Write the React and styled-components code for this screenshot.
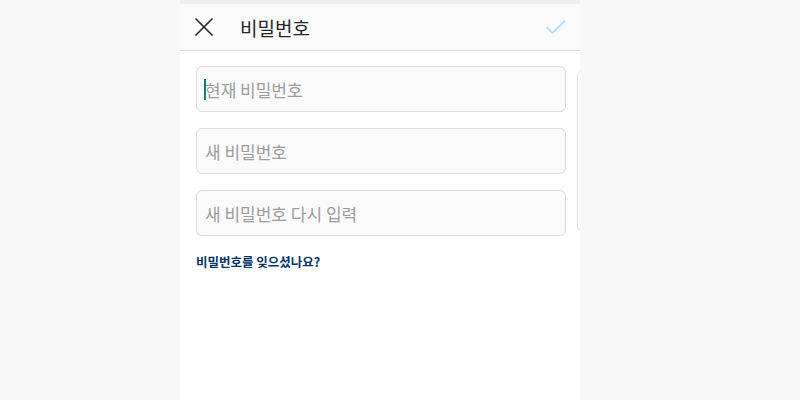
import React from "react";
import styled, { createGlobalStyle } from "styled-components";

const GlobalStyle = createGlobalStyle`
  html, body {
    margin: 0;
    padding: 0;
    background: #f8f8f8;
    font-family: "Noto Sans CJK KR", "Noto Sans", sans-serif;
  }
`;

const Page = styled.div`
  height: 400px;
  display: flex;
  padding-left: 180px;
  overflow: hidden;
`;

const Column = styled.div`
  width: 400px;
  background: #fff;
  position: relative;
  overflow: hidden;
`;

const TopStrip = styled.div`
  height: 4px;
  background: #efefef;
`;

const Header = styled.header`
  height: 47px;
  box-sizing: border-box;
  display: flex;
  align-items: center;
  padding: 0 12px 0 14px;
  background: #fafafa;
  border-bottom: 1px solid #dbdbdb;
`;

const IconButton = styled.button`
  border: 0;
  background: none;
  padding: 0;
  display: flex;
  align-items: center;
  justify-content: center;
  width: ${(p) => p.size}px;
  height: ${(p) => p.size}px;
`;

const Title = styled.h1`
  flex: 1;
  margin: 0 0 0 26px;
  font-size: 19px;
  font-weight: 400;
  color: #262626;
`;

const Form = styled.form`
  display: flex;
  flex-direction: column;
  gap: 16px;
  padding: 15px 14px 0 16px;
`;

const Field = styled.input`
  height: 46px;
  box-sizing: border-box;
  border: 1px solid #dbdbdb;
  border-radius: 6px;
  background: #fafafa;
  padding: 0 8px;
  font-family: inherit;
  font-size: 17px;
  color: #262626;
  outline: none;
  caret-color: #00897b;
  &::placeholder {
    color: #9c9c9c;
  }
`;

const Forgot = styled.a`
  display: block;
  margin: 16px 0 0 16px;
  font-size: 12.5px;
  font-weight: 700;
  color: #003569;
  text-decoration: none;
`;

const EdgeCard = styled.div`
  position: absolute;
  left: 397px;
  top: 70px;
  width: 20px;
  height: 160px;
  border: 1px solid #e0e0e0;
  border-radius: 6px;
  background: #fff;
`;

const Caret = styled.span`
  position: absolute;
  left: 24px;
  top: 79px;
  width: 2px;
  height: 21px;
  background: #00897b;
`;

export default function App() {
  return (
    <>
      <GlobalStyle />
      <Page>
        <Column>
          <TopStrip />
          <Header>
            <IconButton size={20} aria-label="닫기">
              <svg width="20" height="20" viewBox="0 0 20 20">
                <path d="M1.5 1.5 L18.5 18.5 M18.5 1.5 L1.5 18.5" stroke="#262626" strokeWidth="1.6" fill="none" />
              </svg>
            </IconButton>
            <Title>비밀번호</Title>
            <IconButton size={24} aria-label="완료">
              <svg width="22" height="18" viewBox="0 0 22 18">
                <path d="M1.5 9 L7.5 15 L20 2.5" stroke="#b2dffc" strokeWidth="1.8" fill="none" />
              </svg>
            </IconButton>
          </Header>
          <Form>
            <Field type="password" placeholder="현재 비밀번호" />
            <Field type="password" placeholder="새 비밀번호" />
            <Field type="password" placeholder="새 비밀번호 다시 입력" />
          </Form>
          <Forgot href="#">비밀번호를 잊으셨나요?</Forgot>
          <Caret />
          <EdgeCard />
        </Column>
      </Page>
    </>
  );
}
